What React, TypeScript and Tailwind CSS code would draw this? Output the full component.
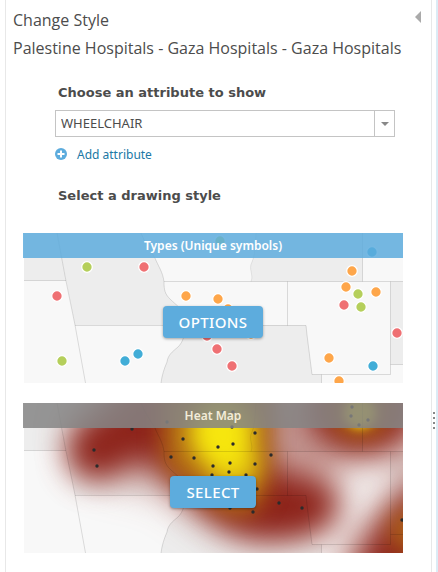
import { useId, type ReactNode } from "react";

type Dot = [number, number, string];

const GREEN = "#b5cf5b";
const RED = "#ef7073";
const ORANGE = "#fea64a";
const BLUE = "#41add7";

const typeDots: Dot[] = [
  [64, 34, GREEN], [121, 34, RED], [34, 63, RED], [163, 63, ORANGE],
  [39, 128, GREEN], [102, 128, BLUE], [115, 121, BLUE], [184, 103, RED],
  [197, 8, GREEN], [349, 19, BLUE], [329, 38, ORANGE], [323, 54, ORANGE],
  [335, 61, GREEN], [353, 59, ORANGE], [321, 72, RED], [338, 74, GREEN],
  [374, 100, RED], [306, 125, ORANGE], [350, 133, BLUE], [316, 148, ORANGE],
  [195, 66, ORANGE], [205, 76, ORANGE], [194, 116, RED], [209, 133, RED],
  [228, 101, ORANGE],
];

const heatPoints: [number, number][] = [
  [109, 26], [71, 47], [74, 63], [144, 19], [160, 36], [148, 54], [171, 55],
  [190, 63], [189, 72], [232, 30], [209, 24], [210, 41], [195, 44], [248, 52],
  [232, 61], [207, 60], [206, 69], [223, 72], [234, 86], [256, 100], [279, 105],
  [230, 109], [207, 105], [379, 117], [329, 4], [328, 13], [345, 17], [336, 22],
  [200, 9], [210, 9],
];

const RIVER =
  "M118 0 C122 10 127 17 132 25 C135 33 140 39 141 49 C141 57 142 61 147 66 C153 72 160 76 162 84 L162 92";
const RIVER_SOUTH = "M162 92 C162 102 160 109 155 114 C149 119 145 122 144 129 C141 136 139 142 138 150";

function Regions() {
  return (
    <>
      <rect x="1" width="379" height="150" fill="#f8f8f8" />
      <path d="M1 0H34L43 47.5H1Z" fill="#ededed" />
      <path d={RIVER + " H52 L34 0Z"} fill="#ededed" />
      <path d={RIVER_SOUTH + " H298.500 V141.500 H289 L284 102 L283 92.500Z"} fill="#ededed" />
      <path d="M233 0 C232 12 232 22 229 29 C225 36 231 42 228 48.500 H339.500 V0Z" fill="#ededed" />
      <path d="M367.500 48.500H380V131.500H367.500Z" fill="#ededed" />
    </>
  );
}

function Boundaries() {
  return (
    <g fill="none" stroke="#000" strokeOpacity="0.12">
      <path d="M34 0L43 48L52 92L62.500 150M1 47.500H43M52 92.500H283" />
      <path d={RIVER} />
      <path d={RIVER_SOUTH} />
      <path d="M141 48.500H380M264.500 48.500V92.500M339.500 0V48.500" />
      <path d="M283 92.500L284 102L289 141.500H367.500V48.500M367.500 131.500H380M298.500 141.500V150" />
      <path d="M233 0 C232 12 232 22 229 29 C225 36 231 42 228 48.500" strokeOpacity="0.08" />
    </g>
  );
}

function TypesMap() {
  return (
    <svg viewBox="0 0 380 150" className="block w-full" aria-hidden="true">
      <Regions />
      <Boundaries />
      {typeDots.map(([x, y, fill], i) => (
        <circle key={i} cx={x} cy={y} r="5.300" fill={fill} stroke="#fff" strokeWidth="1.300" />
      ))}
    </svg>
  );
}

function HeatMap() {
  const id = useId();
  return (
    <svg viewBox="0 0 380 150" className="block w-full" aria-hidden="true">
      <defs>
        {[5, 11, 15, 20].map((s) => (
          <filter
            key={s}
            id={`${id}b${s}`}
            filterUnits="userSpaceOnUse"
            x="-80"
            y="-80"
            width="560"
            height="320"
            colorInterpolationFilters="sRGB"
          >
            <feGaussianBlur stdDeviation={s} />
          </filter>
        ))}
        <clipPath id={`${id}c`}>
          <rect x="1" width="379" height="150" />
        </clipPath>
      </defs>
      <g clipPath={`url(#${id}c)`}>
        <Regions />
        <g filter={`url(#${id}b20)`} fill="#8f2a20" fillOpacity="0.45">
          <path d="M70 -20 H400 V60 L370 50 L310 62 L310 125 L210 135 L140 85 L70 70 L50 40Z" />
          <path d="M310 165 L400 50 V170Z" />
        </g>
        <g filter={`url(#${id}b15)`} fill="#8d231a">
          <path d="M84 6 C100 -25 150 -40 180 -30 L243 -30 L240 55 L262 72 C292 70 318 86 314 106 C308 132 260 142 225 134 C185 121 160 90 140 69 C120 45 102 62 86 74 C66 84 42 68 45 42 C50 22 68 18 84 6Z" />
          <ellipse cx="339" cy="6" rx="54" ry="44" />
          <path d="M316 182 L350 130 L372 102 L410 65 V180Z" />
        </g>
        <g filter={`url(#${id}b11)`} fill="#b57215">
          <path d="M140 -20 H247 V35 C247 62 248 90 230 108 C218 115 194 108 180 94 C162 77 140 70 140 45Z" fillOpacity="0.95" />
          <ellipse cx="337" cy="8" rx="27" ry="25" />
          <circle cx="391" cy="128" r="23" fillOpacity="0.8" />
        </g>
        <g filter={`url(#${id}b11)`} fill="#f6e60e">
          <ellipse cx="199" cy="29" rx="32" ry="38" />
          <ellipse cx="211" cy="61" rx="25" ry="23" fillOpacity="0.75" />
        </g>
        <ellipse cx="337" cy="10" rx="15" ry="15" fill="#f0d313" filter={`url(#${id}b5)`} />
        <Boundaries />
        {heatPoints.map(([x, y], i) => (
          <circle key={i} cx={x} cy={y} r="1.700" fill="#2b2b2b" />
        ))}
      </g>
    </svg>
  );
}

type StyleCardProps = { title: string; action: string; header: string; children: ReactNode };

function StyleCard({ title, action, header, children }: StyleCardProps) {
  return (
    <section className="relative overflow-hidden">
      {children}
      <h3 className={"absolute inset-x-0 top-0 h-[25px] text-center font-['Noto_Sans',sans-serif] text-xs leading-[25px] font-semibold " + header}>
        {title}
      </h3>
      <div className="absolute inset-x-0 top-[73px] flex justify-center">
        <button
          type="button"
          className="h-8 rounded-sm bg-[#5dacdd] px-4 font-['Noto_Sans',sans-serif] text-[15px] leading-[30px] font-medium tracking-wide text-white shadow-[0_1px_3px_rgba(0,0,0,0.35)]"
        >
          {action}
        </button>
      </div>
    </section>
  );
}

export default function App() {
  return (
    <div className="flex min-h-screen bg-white pl-[5px] text-[#4c4c4c]">
      <main className="min-w-0 flex-1 border-x border-[#e8e8e8] pt-2">
        <header className="flex items-start justify-between pr-[10px] pl-[7px]">
          <div className="font-['Open_Sans',sans-serif] text-base leading-7 whitespace-nowrap">
            <h1 className="leading-6">Change Style</h1>
            <p className="pt-[2px]">Palestine Hospitals - Gaza Hospitals - Gaza Hospitals</p>
          </div>
          <button type="button" aria-label="Collapse panel" className="-ml-4 pt-[3px]">
            <svg width="6" height="12" viewBox="0 0 6 12" className="block">
              <path d="M6 0V12L0 6Z" fill="#aaa" />
            </svg>
          </button>
        </header>

        <div className="pt-[21px] pr-9 pl-[49px]">
          <label htmlFor="attribute" className="block pl-[3px] font-['DejaVu_Sans',sans-serif] text-[13px] leading-5 font-bold">
            Choose an attribute to show
          </label>
          <div className="relative mt-[7px]">
            <select
              id="attribute"
              className="block h-[27px] w-full appearance-none border border-[#c4c4c4] bg-white pr-6 pl-[5px] font-['Noto_Sans',sans-serif] text-[13px]"
            >
              <option>WHEELCHAIR</option>
            </select>
            <span className="pointer-events-none absolute inset-y-0 right-0 flex w-[21px] items-center justify-center border-l border-[#c4c4c4]">
              <svg width="8" height="4" viewBox="0 0 8 4">
                <path d="M0 0H8L4 4Z" fill="#888" />
              </svg>
            </span>
          </div>
          <button type="button" className="mt-2 flex h-5 items-center gap-[10px] font-['Noto_Sans',sans-serif] text-xs text-[#2078a5]">
            <svg width="12" height="12" viewBox="0 0 12 12" className="mb-[3px]">
              <circle cx="6" cy="6" r="6" fill="#5dacdd" />
              <path d="M6 2.500V9.500M2.500 6H9.500" stroke="#fff" strokeWidth="2" />
            </svg>
            Add attribute
          </button>
          <h2 className="pt-[21px] pl-[3px] font-['DejaVu_Sans',sans-serif] text-[13px] leading-5 font-bold">
            Select a drawing style
          </h2>
        </div>

        <div className="flex flex-col gap-5 pt-[27px] pr-7 pl-[17px]">
          <StyleCard title="Types (Unique symbols)" action="OPTIONS" header="bg-[#5dacdd]/85 text-white">
            <TypesMap />
          </StyleCard>
          <StyleCard title="Heat Map" action="SELECT" header="bg-[#858585]/85 text-[#f3ecd9]">
            <HeatMap />
          </StyleCard>
        </div>
      </main>

      <div className="flex w-[6px] flex-col gap-[3px] border-r-2 border-[#dcebf5] pt-[412px] pl-px">
        <span className="size-[2px] bg-[#888]" />
        <span className="size-[2px] bg-[#888]" />
        <span className="size-[2px] bg-[#888]" />
        <span className="size-[2px] bg-[#888]" />
      </div>
    </div>
  );
}
